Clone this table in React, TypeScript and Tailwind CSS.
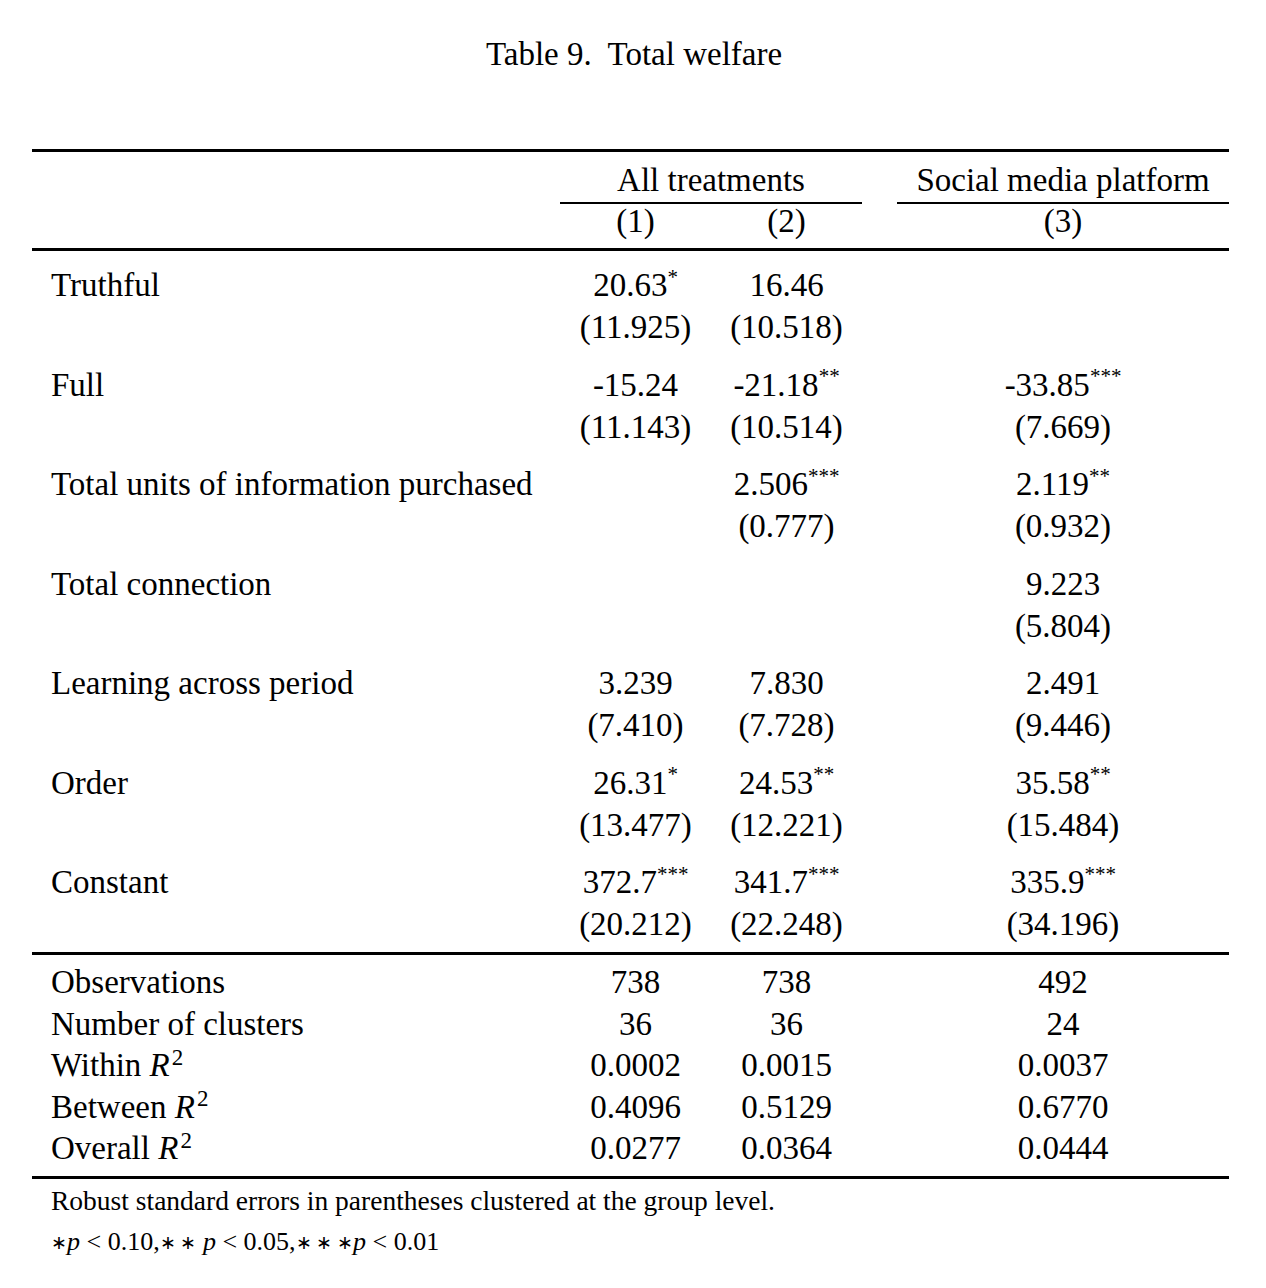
import React from "react";

type V = string | undefined;

const cols = "grid grid-cols-[528px_151px_151px_35px_332px]";

function Val({ v }: { v: V }) {
  if (!v) return <div />;
  const m = v.match(/^([^*]*)(\**)$/);
  const num = m ? m[1] : v;
  const stars = m ? m[2] : "";
  return (
    <div className="text-center whitespace-nowrap">
      {num}
      {stars && <sup className="text-[21px] top-[-0.58em]">{stars}</sup>}
    </div>
  );
}

function Line({
  label,
  a,
  b,
  c,
  lh,
}: {
  label?: React.ReactNode;
  a?: V;
  b?: V;
  c?: V;
  lh: string;
}) {
  return (
    <div className={`${cols} ${lh}`}>
      <div className="pl-[19px] whitespace-nowrap">{label}</div>
      <Val v={a} />
      <Val v={b} />
      <div />
      <Val v={c} />
    </div>
  );
}

const groups: { label: string; coef: V[]; se: V[] }[] = [
  { label: "Truthful", coef: ["20.63*", "16.46", undefined], se: ["(11.925)", "(10.518)", undefined] },
  { label: "Full", coef: ["-15.24", "-21.18**", "-33.85***"], se: ["(11.143)", "(10.514)", "(7.669)"] },
  { label: "Total units of information purchased", coef: [undefined, "2.506***", "2.119**"], se: [undefined, "(0.777)", "(0.932)"] },
  { label: "Total connection", coef: [undefined, undefined, "9.223"], se: [undefined, undefined, "(5.804)"] },
  { label: "Learning across period", coef: ["3.239", "7.830", "2.491"], se: ["(7.410)", "(7.728)", "(9.446)"] },
  { label: "Order", coef: ["26.31*", "24.53**", "35.58**"], se: ["(13.477)", "(12.221)", "(15.484)"] },
  { label: "Constant", coef: ["372.7***", "341.7***", "335.9***"], se: ["(20.212)", "(22.248)", "(34.196)"] },
];

const R2 = ({ pre }: { pre: string }) => (
  <>
    {pre} <i>R</i>
    <sup className="text-[23px] top-[-0.5em] ml-[2px]">2</sup>
  </>
);

const Ast = ({ n }: { n: number }) => (
  <span className="text-[19px] relative top-[-1px]">{Array(n).fill("∗").join(" ")}</span>
);

export default function App() {
  return (
    <div
      className="w-[1266px] h-[1288px] bg-white text-black text-[33px]"
      style={{ fontFamily: '"Liberation Serif", "Times New Roman", serif' }}
    >
      <div className="pt-[33px] leading-[42px] text-center pl-[2px]">Table 9.&nbsp; Total welfare</div>

      <div className="ml-[32px] w-[1197px] mt-[74px]">
        <div className="h-[3px] bg-black" />
        <div className={`${cols} mt-[8px] leading-[40px]`}>
          <div />
          <div className="col-span-2 text-center">All treatments</div>
          <div />
          <div className="text-center">Social media platform</div>
        </div>
        <div className={`${cols} mt-[2px]`}>
          <div />
          <div className="col-span-2 h-[2px] bg-black" />
          <div />
          <div className="h-[2px] bg-black" />
        </div>
        <Line a="(1)" b="(2)" c="(3)" lh="leading-[34px]" />
        <div className="h-[3px] bg-black mt-[10px]" />

        <div className="flex flex-col gap-y-[15.5px] pt-[13px] pb-[7px]">
          {groups.map((g) => (
            <div key={g.label}>
              <Line label={g.label} a={g.coef[0]} b={g.coef[1]} c={g.coef[2]} lh="leading-[42px]" />
              <Line a={g.se[0]} b={g.se[1]} c={g.se[2]} lh="leading-[42px]" />
            </div>
          ))}
        </div>

        <div className="h-[3px] bg-black" />
        <div className="pt-[7px] pb-[6px]">
          <Line label="Observations" a="738" b="738" c="492" lh="leading-[41.5px]" />
          <Line label="Number of clusters" a="36" b="36" c="24" lh="leading-[41.5px]" />
          <Line label={<R2 pre="Within" />} a="0.0002" b="0.0015" c="0.0037" lh="leading-[41.5px]" />
          <Line label={<R2 pre="Between" />} a="0.4096" b="0.5129" c="0.6770" lh="leading-[41.5px]" />
          <Line label={<R2 pre="Overall" />} a="0.0277" b="0.0364" c="0.0444" lh="leading-[41.5px]" />
        </div>
        <div className="h-[3px] bg-black" />
        <div className="pl-[19px] text-[27.5px] leading-[41px] pt-[1px]">
          <div>Robust standard errors in parentheses clustered at the group level.</div>
          <div className="whitespace-nowrap text-[26px]">
            <Ast n={1} />
            <i>p</i> &lt; 0.10,
            <Ast n={2} /> <i>p</i> &lt; 0.05,
            <Ast n={3} />
            <i>p</i> &lt; 0.01
          </div>
        </div>
      </div>
    </div>
  );
}
